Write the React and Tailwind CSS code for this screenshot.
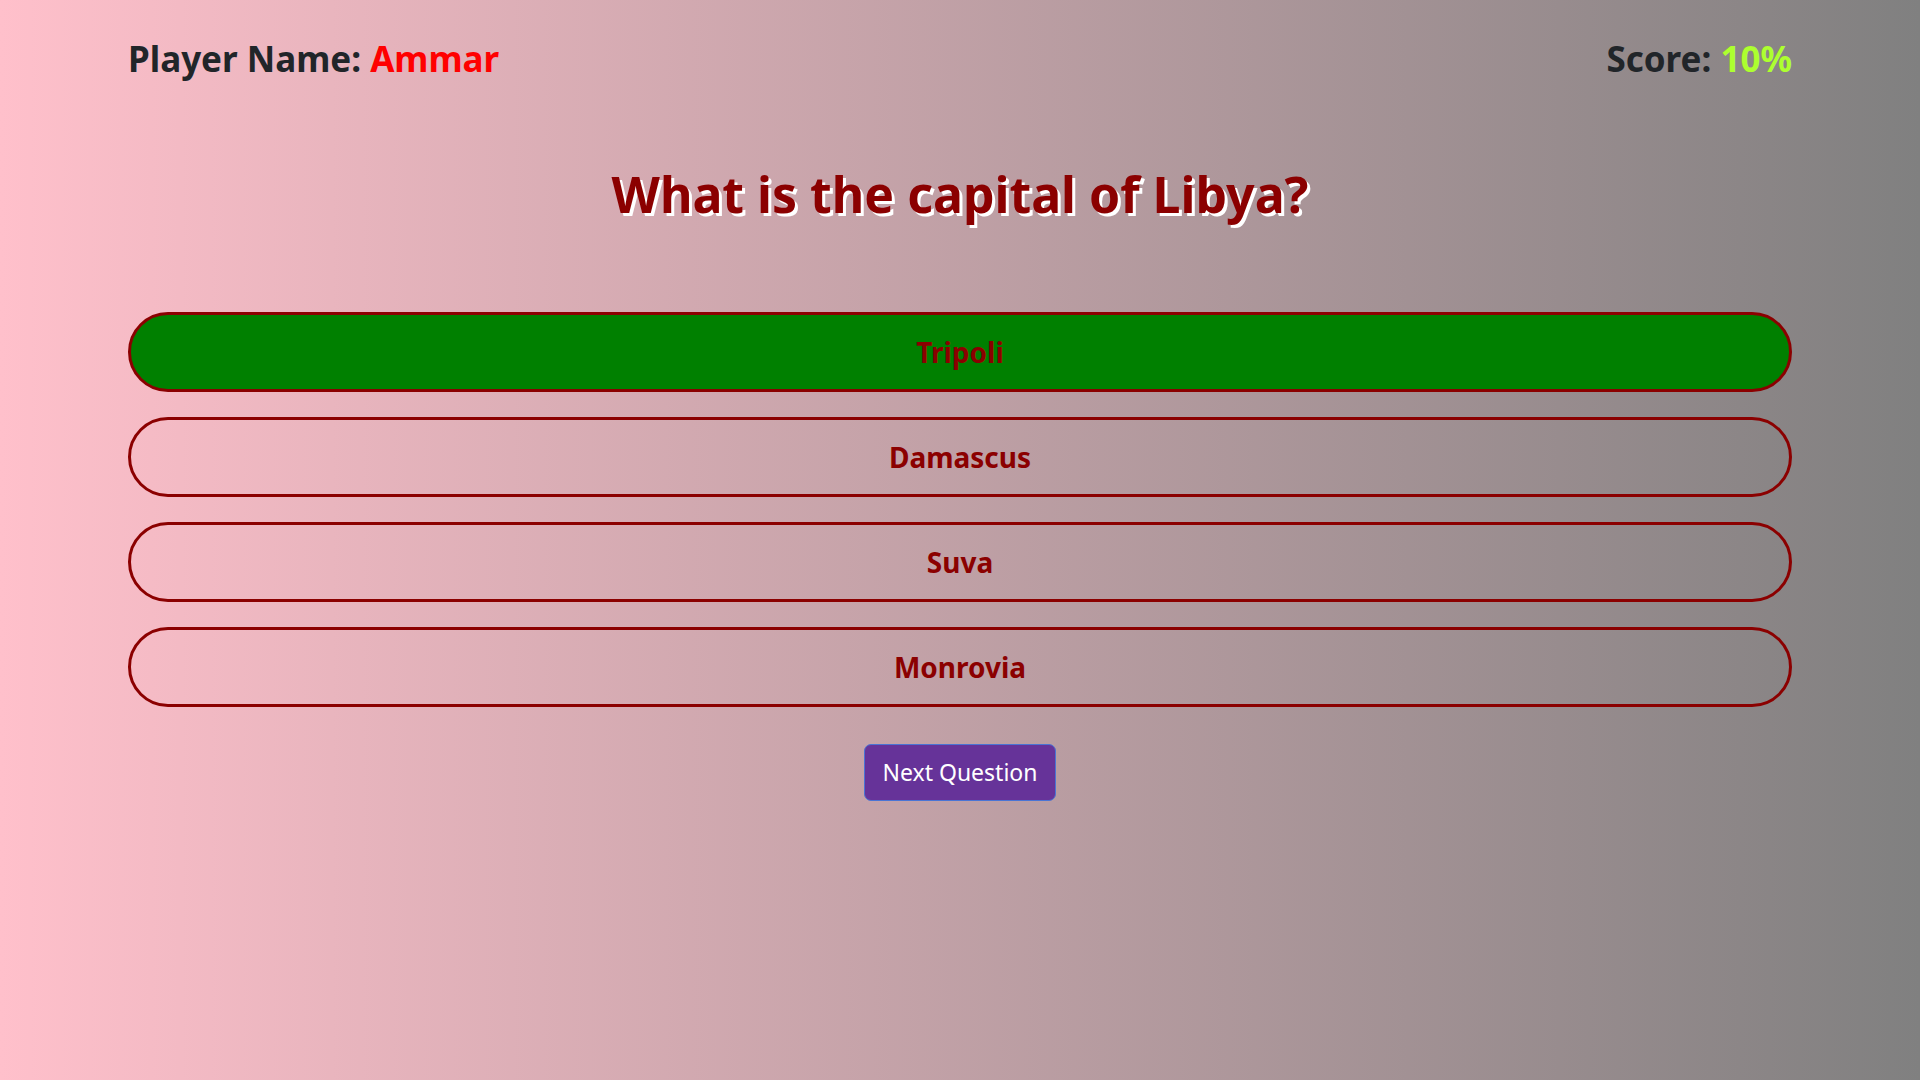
import React, { useState } from "react";

const answers = ["Tripoli", "Damascus", "Suva", "Monrovia"];
const correct = "Tripoli";

export default function App() {
  // the right answer is already revealed in the shot
  const [picked, setPicked] = useState(correct);

  return (
    <div className="min-h-screen bg-[linear-gradient(to_right,#ffc0cb,#808080)] font-['Noto_Sans','Open_Sans',sans-serif]">
      <div className="px-[128px] pt-[38px]">
        {/* Header */}
        <div className="flex items-center justify-between text-[#212529]">
          <h2 className="text-[35px] font-bold leading-[1.2]">
            Player Name: <span className="text-[#ff0000]">Ammar</span>
          </h2>
          <h2 className="text-[35px] font-bold leading-[1.2]">
            Score: <span className="text-[#adff2f]">10%</span>
          </h2>
        </div>

        {/* Question */}
        <h1 className="mt-[84px] text-center text-[50px] font-bold leading-[1.2] text-[#8b0000] [text-shadow:3px_3px_0_#fff]">
          What is the capital of Libya?
        </h1>

        {/* Answers */}
        <div className="mt-[88px] flex flex-col gap-[25px]">
          {answers.map((a) => (
            <button
              key={a}
              onClick={() => setPicked(a)}
              className={
                "h-[80px] w-full rounded-full border-[3px] border-[#8b0000] text-[28px] font-bold text-[#8b0000] " +
                (picked === a ? (a === correct ? "bg-[#008000]" : "bg-[#ff0000]") : "bg-transparent")
              }
            >
              {a}
            </button>
          ))}
        </div>

        {/* Next */}
        <div className="mt-[37px] flex justify-center">
          <button className="h-[57px] w-[192px] rounded-[7px] border border-[#4a74d4] bg-[#663399] text-[23px] text-white">
            Next Question
          </button>
        </div>
      </div>
    </div>
  );
}
